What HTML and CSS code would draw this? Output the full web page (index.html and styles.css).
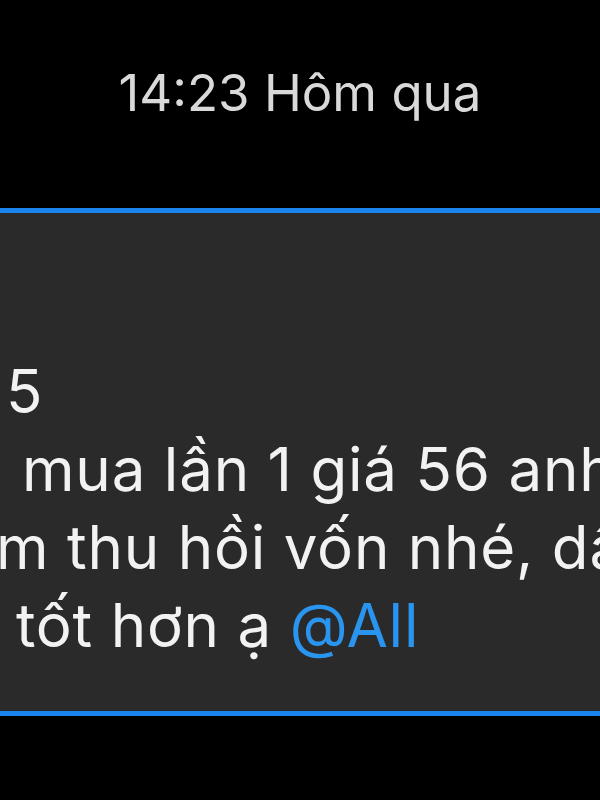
FILE: index.html
```html
<!DOCTYPE html>
<html lang="vi">
<head>
  <meta charset="UTF-8" />
  <meta name="viewport" content="width=device-width, initial-scale=1.0" />
  <title>Tin nhắn</title>
  <link rel="stylesheet" href="styles.css">
</head>
<body>
<div class="chat">
  <div class="time">14:23 Hôm qua</div>

  <div class="message">
    <div class="line line-1">5</div>
    <div class="line line-2">mua lần 1 giá 56 anh</div>
    <div class="line line-3">m thu hồi vốn nhé, dần</div>
    <div class="line line-4">tốt hơn ạ <span class="mention">@All</span></div>
  </div>
</div>
</body>
</html>
```

FILE: styles.css
```css
* {
  margin: 0;
  padding: 0;
  box-sizing: border-box;
  font-family: 'Inter', 'Liberation Sans', sans-serif;
}
body {
  background: #000;
  width: 600px;
  height: 800px;
  overflow: hidden;
}
.time {
  height: 208px;
  padding-top: 63px;
  font-size: 51px;
  line-height: 60px;
  color: #d9d9d9;
  text-align: center;
}
.message {
  background: #2a2a2a;
  border-top: 5px solid #1a85ef;
  border-bottom: 5px solid #1a85ef;
  padding: 139px 0 47px;
  overflow: hidden;
  color: #f2f2f2;
  font-size: 60px;
  line-height: 78px;
  letter-spacing: 0.8px;
  white-space: nowrap;
}
.line-1 {
  padding-left: 6px;
}
.line-2 {
  padding-left: 22px;
}
.line-3 {
  margin-left: -4px;
}
.line-4 {
  padding-left: 16px;
}
.mention {
  color: #2a95ee;
}
```
